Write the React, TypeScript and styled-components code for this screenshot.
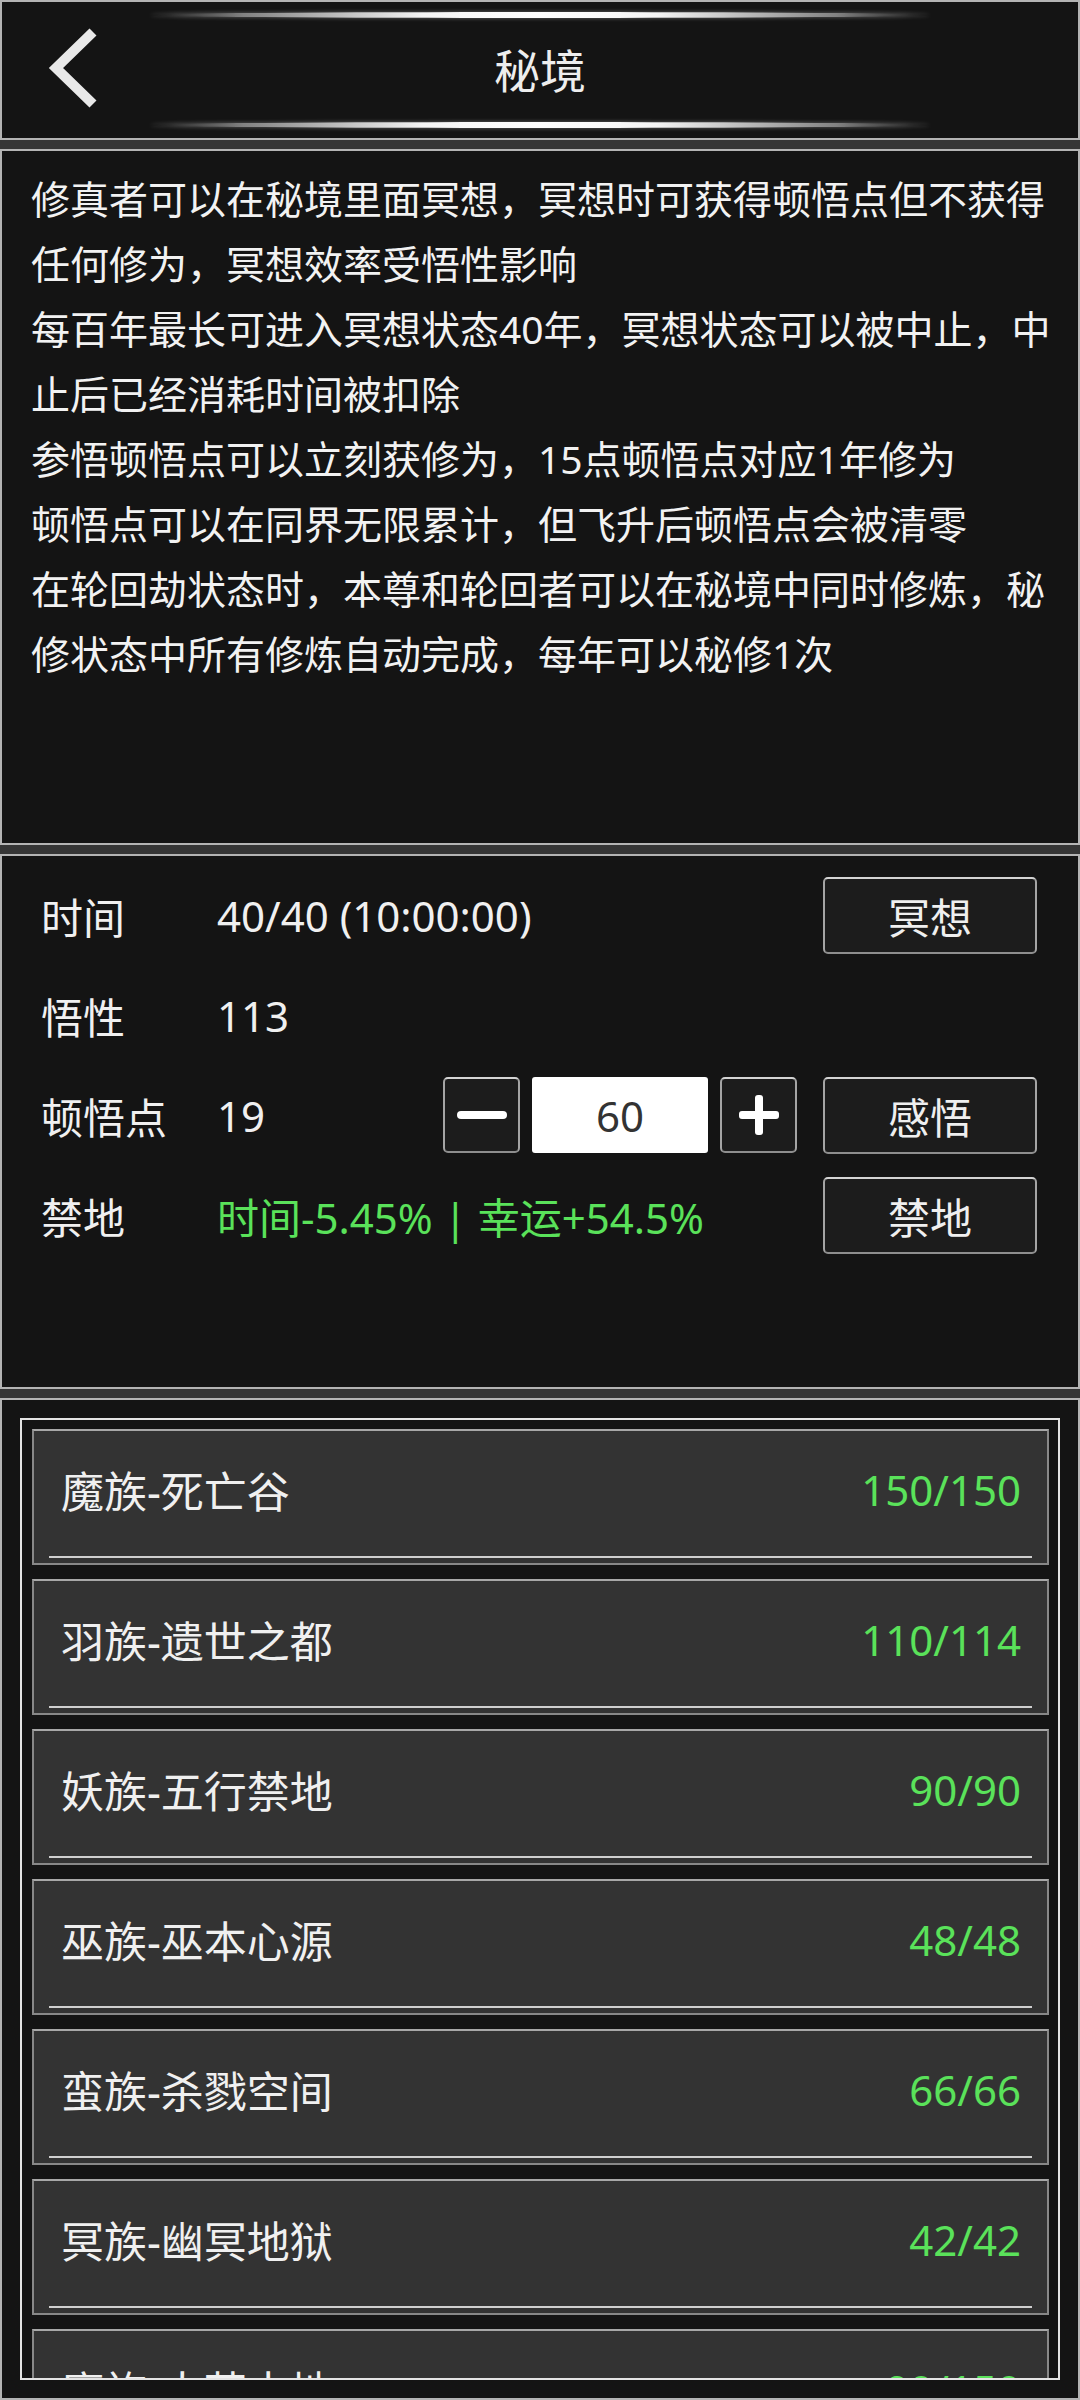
import React from "react";
import styled, { createGlobalStyle } from "styled-components";

const FONT = `"Noto Sans", "Noto Sans CJK SC", sans-serif`;
const GREEN = "#5ae25a";

const Global = createGlobalStyle`
  html, body {
    margin: 0;
    padding: 0;
    background: #353535;
  }
  body {
    font-family: ${FONT};
    color: #f0f0f0;
  }
  #root {
    width: 1080px;
  }
  * { box-sizing: border-box; }
`;

const Page = styled.div`
  width: 1080px;
  display: flex;
  flex-direction: column;
  gap: 9px;
`;

const Panel = styled.section<{ $h: number }>`
  height: ${(p) => p.$h}px;
  border: 2px solid #b4b4b4;
  background: #141414;
  overflow: hidden;
`;

/* ---------- header ---------- */
const Header = styled(Panel)`
  display: flex;
  flex-direction: column;
`;

const Glow = styled.div<{ $top: number }>`
  margin: ${(p) => p.$top}px 148px 0;
  height: 6px;
  border-radius: 50%;
  background: linear-gradient(
    90deg,
    rgba(255, 255, 255, 0) 0%,
    rgba(220, 220, 220, 0.55) 12%,
    #f4f4f4 35%,
    #ffffff 50%,
    #f4f4f4 65%,
    rgba(220, 220, 220, 0.55) 88%,
    rgba(255, 255, 255, 0) 100%
  );
  box-shadow: 0 0 4px rgba(255, 255, 255, 0.35);
`;

const TitleRow = styled.div`
  height: 100px;
  display: grid;
  grid-template-columns: 148px 1fr 148px;
  align-items: center;
`;

const BackButton = styled.button`
  width: 70px;
  height: 84px;
  margin-left: 36px;
  padding: 0;
  border: none;
  background: transparent;
  display: flex;
  align-items: center;
  justify-content: center;
`;

const Title = styled.h1`
  margin: 0;
  text-align: center;
  font-family: ${FONT};
  font-weight: 400;
  font-size: 46px;
  color: #eeeeee;
`;

/* ---------- description ---------- */
const Desc = styled(Panel)`
  padding: 15px 17px 0 29px;
`;

const DescLine = styled.p`
  margin: 0;
  font-size: 39px;
  line-height: 65px;
  color: #f2f2f2;
`;

/* ---------- stats ---------- */
const Stats = styled(Panel)`
  padding: 9px 41px 0 39px;
`;

const Row = styled.div`
  height: 100px;
  display: flex;
  align-items: center;
`;

const Label = styled.div`
  width: 176px;
  flex-shrink: 0;
  font-size: 42px;
  color: #f0f0f0;
  white-space: nowrap;
`;

const Value = styled.div<{ $green?: boolean }>`
  flex: 1;
  font-size: 42px;
  color: ${(p) => (p.$green ? GREEN : "#f0f0f0")};
  white-space: nowrap;
`;

const ActionButton = styled.button`
  width: 214px;
  height: 77px;
  flex-shrink: 0;
  margin-left: 26px;
  border: 2px solid #a4a4a4;
  border-top-color: #d4d4d4;
  border-bottom-color: #8e8e8e;
  border-radius: 5px;
  background: #1c1c1c;
  color: #efefef;
  font-family: ${FONT};
  font-size: 42px;
  display: flex;
  align-items: center;
  justify-content: center;
  padding: 0;
`;

const Stepper = styled.div`
  display: flex;
  gap: 12px;
  align-items: center;
`;

const StepButton = styled.button`
  width: 77px;
  height: 76px;
  border: 2px solid #a4a4a4;
  border-top-color: #d4d4d4;
  border-bottom-color: #8e8e8e;
  border-radius: 5px;
  background: #1c1c1c;
  padding: 0;
  display: flex;
  align-items: center;
  justify-content: center;
`;

const StepInput = styled.input`
  width: 176px;
  height: 76px;
  border: none;
  border-radius: 3px;
  background: #ffffff;
  color: #333333;
  font-family: ${FONT};
  font-size: 42px;
  text-align: center;
  padding: 0;
  outline: none;
`;

/* ---------- list ---------- */
const ListPanel = styled(Panel)`
  padding: 18px;
`;

const Frame = styled.div`
  height: 100%;
  border: 2px solid #e4e4e4;
  padding: 9px 9px 0 10px;
  display: flex;
  flex-direction: column;
  gap: 14px;
  overflow: hidden;
`;

const Card = styled.div`
  height: 136px;
  flex-shrink: 0;
  border: 2px solid #888888;
  border-top-color: #a8a8a8;
  background: #333333;
  display: flex;
  flex-direction: column;
`;

const CardRow = styled.div`
  height: 116px;
  padding: 0 26px 0 27px;
  display: flex;
  align-items: center;
  justify-content: space-between;
`;

const CardName = styled.span`
  font-size: 43px;
  color: #f0f0f0;
`;

const CardValue = styled.span`
  font-size: 42px;
  color: ${GREEN};
`;

const CardLine = styled.div`
  height: 2px;
  margin: 9px 15px 0;
  background: #cfcfcf;
`;

const Chevron = () => (
  <svg width="60" height="84" viewBox="0 0 60 84">
    <polyline
      points="50,6 13,42 50,78"
      fill="none"
      stroke="#e8e8e8"
      strokeWidth="10"
      strokeLinejoin="miter"
      strokeLinecap="butt"
    />
  </svg>
);

const MinusIcon = () => (
  <svg width="52" height="10" viewBox="0 0 52 10">
    <rect x="1" y="1" width="50" height="8" rx="4" fill="#ffffff" />
  </svg>
);

const PlusIcon = () => (
  <svg width="42" height="42" viewBox="0 0 42 42">
    <rect x="1" y="17" width="40" height="8" rx="3" fill="#ffffff" />
    <rect x="17" y="1" width="8" height="40" rx="3" fill="#ffffff" />
  </svg>
);

const descLines = [
  "修真者可以在秘境里面冥想，冥想时可获得顿悟点但不获得任何修为，冥想效率受悟性影响",
  "每百年最长可进入冥想状态40年，冥想状态可以被中止，中止后已经消耗时间被扣除",
  "参悟顿悟点可以立刻获修为，15点顿悟点对应1年修为",
  "顿悟点可以在同界无限累计，但飞升后顿悟点会被清零",
  "在轮回劫状态时，本尊和轮回者可以在秘境中同时修炼，秘修状态中所有修炼自动完成，每年可以秘修1次",
];

const places = [
  { name: "魔族-死亡谷", value: "150/150" },
  { name: "羽族-遗世之都", value: "110/114" },
  { name: "妖族-五行禁地", value: "90/90" },
  { name: "巫族-巫本心源", value: "48/48" },
  { name: "蛮族-杀戮空间", value: "66/66" },
  { name: "冥族-幽冥地狱", value: "42/42" },
  { name: "魔族-大荒古地", value: "90/150" },
];

export default function App() {
  return (
    <>
      <Global />
      <Page>
        <Header $h={140}>
          <Glow $top={10} />
          <TitleRow>
            <BackButton aria-label="返回">
              <Chevron />
            </BackButton>
            <Title>秘境</Title>
            <span />
          </TitleRow>
          <Glow $top={4} />
        </Header>

        <Desc $h={696}>
          {descLines.map((l, i) => (
            <DescLine key={i}>{l}</DescLine>
          ))}
        </Desc>

        <Stats $h={535}>
          <Row>
            <Label>时间</Label>
            <Value>40/40 (10:00:00)</Value>
            <ActionButton>冥想</ActionButton>
          </Row>
          <Row>
            <Label>悟性</Label>
            <Value>113</Value>
          </Row>
          <Row>
            <Label>顿悟点</Label>
            <Value>19</Value>
            <Stepper>
              <StepButton aria-label="减少">
                <MinusIcon />
              </StepButton>
              <StepInput defaultValue="60" />
              <StepButton aria-label="增加">
                <PlusIcon />
              </StepButton>
            </Stepper>
            <ActionButton>感悟</ActionButton>
          </Row>
          <Row>
            <Label>禁地</Label>
            <Value $green>时间-5.45% | 幸运+54.5%</Value>
            <ActionButton>禁地</ActionButton>
          </Row>
        </Stats>

        <ListPanel $h={1002}>
          <Frame>
            {places.map((p) => (
              <Card key={p.name}>
                <CardRow>
                  <CardName>{p.name}</CardName>
                  <CardValue>{p.value}</CardValue>
                </CardRow>
                <CardLine />
              </Card>
            ))}
          </Frame>
        </ListPanel>
      </Page>
    </>
  );
}
